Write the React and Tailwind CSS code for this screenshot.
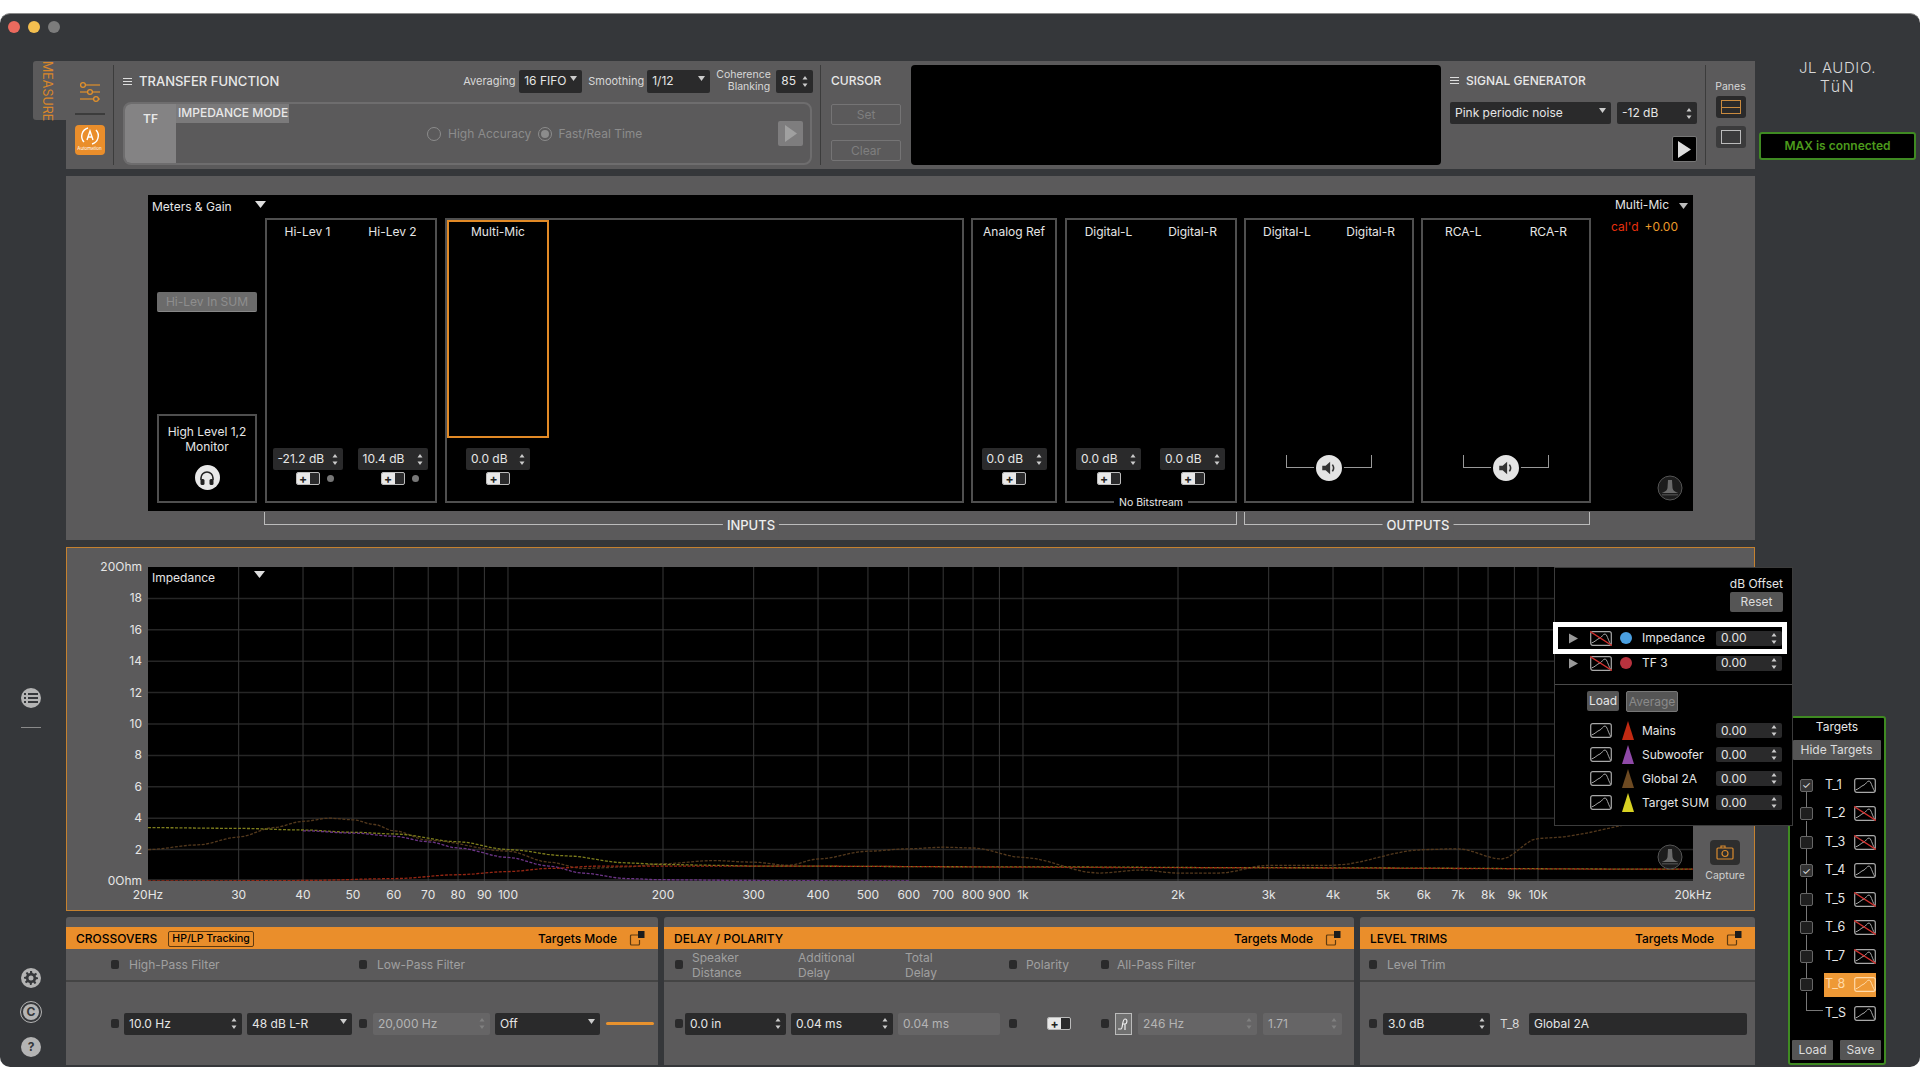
const FONT = 'font-["Inter","Liberation_Sans",sans-serif]'

// freq / ohm to plot pixels (plot is 1545 x 314)
const fx = f => (1545 * Math.log10(f / 20)) / 3
const oy = o => 314 - o * 15.7

const GRID_F = [30, 40, 50, 60, 70, 80, 90, 100, 200, 300, 400, 500, 600, 700, 800, 900, 1000, 2000, 3000, 4000, 5000, 6000, 7000, 8000, 9000, 10000]
const F_LABELS = [[20, '20Hz'], [30, '30'], [40, '40'], [50, '50'], [60, '60'], [70, '70'], [80, '80'], [90, '90'], [100, '100'], [200, '200'], [300, '300'], [400, '400'], [500, '500'], [600, '600'], [700, '700'], [800, '800'], [900, '900'], [1000, '1k'], [2000, '2k'], [3000, '3k'], [4000, '4k'], [5000, '5k'], [6000, '6k'], [7000, '7k'], [8000, '8k'], [9000, '9k'], [10000, '10k'], [20000, '20kHz']]
const O_LABELS = [[20, '20Ohm'], [18, '18'], [16, '16'], [14, '14'], [12, '12'], [10, '10'], [8, '8'], [6, '6'], [4, '4'], [2, '2'], [0, '0Ohm']]

const TRACES = [
  { color: '#54391d', pts: [[20, 2], [25, 2.3], [30, 2.8], [35, 3.4], [40, 3.8], [45, 4], [50, 3.9], [55, 3.6], [60, 3.2], [70, 2.6], [100, 1.9], [120, 1.2], [140, 0.8], [170, 0.9], [200, 1.1], [250, 1.3], [300, 1.2], [350, 1], [400, 1.4], [500, 1.9], [600, 2.05], [700, 2.15], [800, 2.1], [1000, 1.5], [1400, 0.5], [1700, 0.7], [2000, 0.5], [2400, 0.5], [3000, 1], [4000, 1], [6000, 2], [7000, 2.05], [8500, 1.4], [10000, 2.7], [20000, 4.2]] },
  { color: '#7d7d1c', pts: [[20, 3.4], [30, 3.35], [40, 3.25], [50, 3.1], [60, 3], [80, 2.5], [100, 2], [130, 1.6], [170, 1.15], [200, 1.05], [250, 1], [300, 0.95], [1000, 0.9], [3000, 0.85], [20000, 0.75]] },
  { color: '#6d3588', pts: [[40, 3.2], [50, 3.05], [60, 2.85], [70, 2.5], [80, 2.1], [100, 1.5], [120, 0.95], [140, 0.5], [170, 0.15], [200, 0.08], [300, 0.03], [600, 0]] },
  { color: '#962613', pts: [[20, 0], [40, 0.03], [60, 0.15], [80, 0.4], [100, 0.6], [120, 0.8], [150, 0.95], [300, 0.95], [2000, 0.85], [20000, 0.75]] },
]

// smooth enough for a log plot: many short segments interpolated between points
const tracePath = pts => {
  const out = []
  for (let i = 0; i < pts.length - 1; i++) {
    const [f0, o0] = pts[i]
    const [f1, o1] = pts[i + 1]
    for (let s = 0; s < 6; s++) {
      const t = s / 6
      const e = t * t * (3 - 2 * t)
      const f = f0 * Math.pow(f1 / f0, t)
      out.push(`${fx(f).toFixed(1)},${oy(o0 + (o1 - o0) * e).toFixed(1)}`)
    }
  }
  const last = pts[pts.length - 1]
  out.push(`${fx(last[0]).toFixed(1)},${oy(last[1]).toFixed(1)}`)
  return out.join(' ')
}

function Hamburger() {
  return (
    <div className="flex flex-col gap-[2px] w-[9px] mr-[7px] shrink-0">
      <div className="h-px bg-[#ddd]" />
      <div className="h-px bg-[#ddd]" />
      <div className="h-px bg-[#ddd]" />
    </div>
  )
}

function Arrows({ dim }) {
  const c = dim ? '#808080' : '#ccc'
  return (
    <svg width="6" height="13" viewBox="0 0 6 13" className="shrink-0">
      <path d="M3 1 L5.5 4.5 H0.5 Z" fill={c} />
      <path d="M3 12 L5.5 8.5 H0.5 Z" fill={c} />
    </svg>
  )
}

function Field({ w, children, dim, h = 'h-[22px]', arrows = true }) {
  return (
    <div
      style={{ width: w }}
      className={`${h} shrink-0 rounded-[2px] flex items-center justify-between pl-[5px] pr-[5px] text-[12px] ${dim ? 'bg-[#666566] text-[#b4b4b4]' : 'bg-[#2a2a2b] text-[#e6e6e6]'}`}
    >
      <span className="whitespace-nowrap">{children}</span>
      {arrows && <Arrows dim={dim} />}
    </div>
  )
}

function Select({ w, children, h = 'h-[22px]' }) {
  return (
    <div style={{ width: w }} className={`${h} shrink-0 rounded-[2px] bg-[#2a2a2b] flex justify-between pl-[5px] pr-[5px] text-[12px] text-[#e6e6e6]`}>
      <span className="self-center whitespace-nowrap">{children}</span>
      <svg width="7" height="5" viewBox="0 0 7 5" className="mt-[6px]"><path d="M0 0 H7 L3.5 5 Z" fill="#ccc" /></svg>
    </div>
  )
}

function Led({ className = '' }) {
  return <div className={`w-[8px] h-[9px] rounded-[2px] bg-[#2a2a2b] shrink-0 ${className}`} />
}

function Toggle() {
  return (
    <div className="w-[24px] h-[13px] rounded-[2px] bg-[#2a2a2b] border border-[#bbb] flex overflow-hidden">
      <div className="w-[13px] bg-[#e8e8e8] flex items-center justify-center text-[#222] text-[12px] font-bold leading-none">+</div>
    </div>
  )
}

function CurveIcon({ off, light }) {
  const c = light ? '#ffd9a8' : '#a8a8a8'
  return (
    <svg width="22" height="15" viewBox="0 0 22 15" className="shrink-0">
      <rect x="0.7" y="0.7" width="20.6" height="13.6" rx="2" fill="none" stroke={c} strokeWidth="1.2" />
      <path d="M1.5 12 C5 11 7 8 10 7 C12 6 13 3 15 3 C17 3 18 9 20.5 13" fill="none" stroke={c} strokeWidth="1" />
      {off && <path d="M0 0.5 L22 14.5" stroke="#d3312e" strokeWidth="1.4" />}
    </svg>
  )
}

function JLBadge({ className = '' }) {
  return (
    <svg width="26" height="26" viewBox="0 0 26 26" className={className}>
      <circle cx="13" cy="13" r="12" fill="#1c1c1c" stroke="#555" strokeWidth="1" />
      <path d="M11 5 H15 L15.5 13 C16 16 19 17 21 18 H5 C7 17 10 16 10.5 13 Z" fill="#6a6a6a" />
      <rect x="5" y="19" width="16" height="1.5" fill="#444" />
    </svg>
  )
}

function Strip({ label, children, className = '' }) {
  return (
    <div className={`flex flex-col items-center ${className}`}>
      <div className="mt-[4px] text-[12px] text-[#e6e6e6] whitespace-nowrap leading-[16px]">{label}</div>
      <div className="flex-1" />
      {children}
    </div>
  )
}

function Gain({ value, w, dot }) {
  return (
    <div className="flex flex-col items-center mb-[16px]">
      <Field w={w}>{value}</Field>
      <div className="relative mt-[2px]">
        <Toggle />
        {dot && <div className="absolute top-[3px] left-[31px] w-[7px] h-[7px] rounded-full bg-[#777]" />}
      </div>
    </div>
  )
}

function Speaker({ w }) {
  return (
    <div className="flex justify-center mb-[14px]">
      <div className="relative h-[32px]" style={{ width: w }}>
        <div className="absolute left-0 right-0 top-0 h-[13px] border-l border-r border-b border-[#999]" />
        <div className="absolute left-1/2 top-[-2px] -translate-x-1/2 w-[26px] h-[26px] rounded-full bg-[#e4e4e4] flex items-center justify-center border-2 border-black box-content">
          <svg width="18" height="18" viewBox="0 0 16 16">
            <path d="M2 6 H5 L9 2.5 V13.5 L5 10 H2 Z" fill="#333" />
            <path d="M11 5 C12.5 7 12.5 9 11 11" fill="none" stroke="#333" strokeWidth="1.4" />
          </svg>
        </div>
      </div>
    </div>
  )
}

function BoxRow({ className = '', children }) {
  return <div className={`border-2 border-[#4f4f4f] flex h-[285px] shrink-0 ${className}`}>{children}</div>
}

function MetersPanel() {
  return (
    <div className="ml-[82px] mr-[62px] h-[316px] bg-black flex relative text-[12px]">
      <div className="w-[117px] pl-[9px] pr-[8px] flex flex-col shrink-0">
        <div className="h-[23px] flex items-center justify-between text-[#e6e6e6]">
          <span className="-ml-[5px]">Meters &amp; Gain</span>
          <svg width="11" height="7" viewBox="0 0 11 7" className="mr-[-9px] mb-[4px]"><path d="M0 0 H11 L5.5 7 Z" fill="#ddd" /></svg>
        </div>
        <div className="mt-[74px] h-[20px] rounded-[2px] bg-[#6b6b6b] border-b border-[#888] flex items-center justify-center text-[#8e8e8e] whitespace-nowrap text-[12px]">Hi-Lev In SUM</div>
        <div className="mt-[102px] h-[89px] border-2 border-[#4f4f4f] flex flex-col items-center text-center text-[#e6e6e6] leading-[15px]">
          <div className="mt-[8px]">High Level 1,2<br />Monitor</div>
          <div className="mt-[11px] w-[25px] h-[25px] rounded-full bg-[#e8e8e8] flex items-center justify-center">
            <svg width="18" height="18" viewBox="0 0 18 18">
              <path d="M3 11 V9 a6 6 0 0 1 12 0 V11" fill="none" stroke="#222" strokeWidth="1.6" />
              <rect x="2.5" y="10" width="4" height="6" rx="1.5" fill="#222" />
              <rect x="11.5" y="10" width="4" height="6" rx="1.5" fill="#222" />
            </svg>
          </div>
        </div>
      </div>

      <div className="mt-[23px] flex shrink-0">
        <BoxRow className="w-[172px]">
          <Strip label="Hi-Lev 1" className="w-[84px] pr-[3px]"><Gain value="-21.2 dB" w="70px" dot /></Strip>
          <Strip label="Hi-Lev 2" className="w-[84px] pr-[1px]"><Gain value="10.4 dB" w="70px" dot /></Strip>
        </BoxRow>
        <BoxRow className="w-[519px] ml-[8px] relative">
          <Strip label="Multi-Mic" className="w-[102px]"><Gain value="0.0 dB" w="64px" /></Strip>
          <div className="absolute left-[0px] top-[0px] w-[102px] h-[218px] border-2 border-[#e28a26]" />
        </BoxRow>
        <BoxRow className="w-[86px] ml-[7px]">
          <Strip label="Analog Ref" className="w-full"><Gain value="0.0 dB" w="65px" /></Strip>
        </BoxRow>
        <BoxRow className="w-[172px] ml-[8px] relative">
          <Strip label="Digital-L" className="w-[84px]"><Gain value="0.0 dB" w="65px" /></Strip>
          <Strip label="Digital-R" className="w-[86px]"><Gain value="0.0 dB" w="65px" /></Strip>
          <div className="absolute left-1/2 -translate-x-1/2 bottom-[-9px] bg-black px-[5px] text-[#e6e6e6] text-[10.5px] whitespace-nowrap leading-[14px]">No Bitstream</div>
        </BoxRow>
        <BoxRow className="w-[170px] ml-[7px]">
          <div className="w-full flex flex-col">
            <div className="flex justify-between px-[17px] mt-[4px] text-[12px] text-[#e6e6e6] leading-[16px]"><span>Digital-L</span><span>Digital-R</span></div>
            <div className="flex-1" />
            <Speaker w="86px" />
          </div>
        </BoxRow>
        <BoxRow className="w-[170px] ml-[7px]">
          <div className="w-full flex flex-col">
            <div className="flex justify-between px-[22px] mt-[4px] text-[12px] text-[#e6e6e6] leading-[16px]"><span>RCA-L</span><span>RCA-R</span></div>
            <div className="flex-1" />
            <Speaker w="86px" />
          </div>
        </BoxRow>
      </div>

      <div className="flex-1 flex flex-col items-end pr-[5px] text-[12px]">
        <div className="h-[20px] flex items-center gap-[10px] text-[#e6e6e6]">
          <span>Multi-Mic</span>
          <svg width="9" height="6" viewBox="0 0 9 6" className="mt-[2px]"><path d="M0 0 H9 L4.5 6 Z" fill="#bbb" /></svg>
        </div>
        <div className="mt-[3px] mr-[10px] flex gap-[6px]">
          <span className="text-[#e8300e]">cal'd</span>
          <span className="text-[#ea9a2a]">+0.00</span>
        </div>
        <div className="flex-1" />
        <JLBadge className="mb-[10px] mr-[5px]" />
      </div>
    </div>
  )
}

function Bracket({ w, ml, label, center }) {
  return (
    <div style={{ width: w, marginLeft: ml }} className="relative h-[13px] border-l border-r border-b border-[#bbb] shrink-0">
      <span style={{ left: center }} className="absolute top-[5px] -translate-x-1/2 bg-[#5b5a5b] px-[4px] text-[13px] leading-[16px] font-medium text-[#eee]">{label}</span>
    </div>
  )
}

function Plot() {
  return (
    <div className="relative w-[1545px] h-[314px] bg-black ml-[81px] mt-[19px]">
      <svg width="1545" height="314" className="absolute left-0 top-0">
        {O_LABELS.slice(1, -1).map(([o]) => (
          <line key={o} x1="0" x2="1545" y1={oy(o)} y2={oy(o)} stroke="#262626" strokeWidth="1.5" />
        ))}
        {GRID_F.map(f => (
          <line key={f} x1={fx(f)} x2={fx(f)} y1="0" y2="314" stroke="#383838" strokeWidth="1" />
        ))}
        <line x1="0" x2="1545" y1="313" y2="313" stroke="#444" />
        {TRACES.map(t => (
          <polyline key={t.color} points={tracePath(t.pts)} fill="none" stroke={t.color} strokeWidth="1.3" strokeDasharray="3 1.5" />
        ))}
      </svg>
      <div className="absolute left-[4px] top-[2px] w-[113px] flex justify-between text-[12px] text-[#e6e6e6] leading-[18px]">
        <span>Impedance</span>
        <svg width="11" height="7" viewBox="0 0 11 7" className="mt-[2px]"><path d="M0 0 H11 L5.5 7 Z" fill="#ddd" /></svg>
      </div>
      <JLBadge className="absolute left-[1509px] top-[277px]" />
      {O_LABELS.map(([o, label]) => (
        <span key={o} style={{ top: oy(o) - 8 }} className="absolute right-[1551px] text-[12px] leading-[16px] text-[#e6e6e6] whitespace-nowrap">{label}</span>
      ))}
      {F_LABELS.map(([f, label]) => (
        <span key={f} style={{ left: fx(f) }} className="absolute top-[320px] -translate-x-1/2 text-[12px] leading-[16px] text-[#e6e6e6] whitespace-nowrap">{label}</span>
      ))}
    </div>
  )
}

const TRACE_ROWS = [
  { name: 'Mains', color: '#c22a12' },
  { name: 'Subwoofer', color: '#8f49a8' },
  { name: 'Global 2A', color: '#6d4a22' },
  { name: 'Target SUM', color: '#d8d222' },
]

function Triangle({ color }) {
  return (
    <svg width="12" height="19" viewBox="0 0 12 19" className="shrink-0">
      <path d="M6 0 L12 19 H0 Z" fill={color} />
    </svg>
  )
}

function OffsetField() {
  return <Field w="66px" h="h-[15px]">0.00</Field>
}

function LegendPopover() {
  return (
    <div className="absolute left-[1487px] top-[19px] w-[239px] h-[259px] bg-black border border-[#3c3c3c] text-[12px] text-[#e6e6e6]">
      <div className="text-right pr-[9px] mt-[9px] leading-[14px]">dB Offset</div>
      <div className="ml-auto mr-[9px] mt-[1px] w-[53px] h-[20px] rounded-[2px] bg-[#555] flex items-center justify-center text-[#ddd]">Reset</div>

      <div className="-ml-[2px] mt-[10px] w-[234px] h-[32px] border-[5px] border-white flex items-center">
        <svg width="14" height="11" viewBox="0 0 14 11" className="ml-[10px] shrink-0"><path d="M1 0.5 L10 5.5 L1 10.5 Z" fill="#999" /></svg>
        <div className="ml-[8px]"><CurveIcon off /></div>
        <div className="ml-[8px] w-[12px] h-[12px] rounded-full bg-[#4a9fe0] shrink-0" />
        <span className="ml-[10px] w-[74px]">Impedance</span>
        <OffsetField />
      </div>
      <div className="h-[18px] flex items-center">
        <svg width="14" height="11" viewBox="0 0 14 11" className="ml-[13px] shrink-0"><path d="M1 0.5 L10 5.5 L1 10.5 Z" fill="#999" /></svg>
        <div className="ml-[8px]"><CurveIcon off /></div>
        <div className="ml-[8px] w-[12px] h-[12px] rounded-full bg-[#b8323e] shrink-0" />
        <span className="ml-[10px] w-[74px]">TF 3</span>
        <OffsetField />
      </div>
      <div className="mt-[12px] border-t border-[#4a4a4a] pt-[6px] pl-[32px] flex gap-[7px]">
        <div className="w-[32px] h-[20px] rounded-[2px] bg-[#555] flex items-center justify-center">Load</div>
        <div className="w-[52px] h-[21px] rounded-[2px] bg-[#555] border border-[#777] flex items-center justify-center text-[#8a8a8a]">Average</div>
      </div>
      <div className="mt-[9px] flex flex-col gap-[5px]">
        {TRACE_ROWS.map(r => (
          <div key={r.name} className="h-[19px] flex items-center">
            <div className="ml-[35px]"><CurveIcon /></div>
            <div className="ml-[10px]"><Triangle color={r.color} /></div>
            <span className="ml-[8px] w-[74px] whitespace-nowrap">{r.name}</span>
            <OffsetField />
          </div>
        ))}
      </div>
    </div>
  )
}

function TopBar() {
  return (
    <div className="h-[108px] bg-[#5b5a5b] flex py-[4px] text-[#e8e8e8]">
      {/* sliders + automation */}
      <div className="w-[48px] border-r border-[#3c3c3c] flex flex-col items-center shrink-0">
        <svg width="24" height="24" viewBox="0 0 24 24" className="mt-[15px]" fill="none" stroke="#e0902c" strokeWidth="1.3">
          <path d="M2 5 H22 M2 12 H22 M2 19 H22" opacity="0.8" />
          <circle cx="5" cy="5" r="2.4" fill="#5b5a5b" />
          <circle cx="12" cy="12" r="2.4" fill="#5b5a5b" />
          <circle cx="18" cy="19" r="2.4" fill="#5b5a5b" />
        </svg>
        <div className="mt-[9px] w-[30px] h-[2px] bg-[#3c3c3c]" />
        <div className="mt-[10px] w-[30px] h-[30px] rounded-[4px] bg-[#ea8e2b] flex flex-col items-center">
          <svg width="22" height="22" viewBox="0 0 22 22" fill="none" stroke="#fff" strokeWidth="1.4">
            <path d="M5 17 A8.5 8.5 0 0 1 9 3" />
            <path d="M17 5 A8.5 8.5 0 0 1 13 19" />
            <path d="M8 15 L11 6 L14 15 M9 12 H13" />
          </svg>
          <span className="text-[4.5px] leading-none text-white">Automation</span>
        </div>
      </div>

      {/* transfer function */}
      <div className="w-[707px] shrink-0 border-r border-[#3c3c3c] px-[9px] flex flex-col">
        <div className="h-[33px] flex items-center text-[11px]">
          <Hamburger />
          <span className="text-[13px] font-medium whitespace-nowrap">TRANSFER FUNCTION</span>
          <span className="ml-[184px] w-[50px] text-[#d8d8d8] whitespace-nowrap">Averaging</span>
          <div className="ml-[6px]"><Select w="63px" h="h-[23px]"><span className="text-[12px]">16 FIFO</span></Select></div>
          <span className="ml-[6px] w-[53px] text-[#d8d8d8]">Smoothing</span>
          <div className="ml-[6px]"><Select w="63px" h="h-[23px]">1/12</Select></div>
          <span className="ml-[6px] w-[54px] text-right leading-[12px] text-[10.5px] text-[#d8d8d8]">Coherence Blanking</span>
          <div className="ml-[6px]"><Field w="37px" h="h-[23px]">85</Field></div>
        </div>
        <div className="mt-[4px] h-[64px] w-[689px] rounded-[8px] border-2 border-[#6e6d6e] flex overflow-hidden">
          <div className="w-[51px] bg-[#848384] flex justify-center pt-[6px] text-[12px] font-semibold shrink-0">TF</div>
          <div className="flex-1 flex flex-col relative">
            <div className="w-[113px] h-[19px] bg-[#7b7a7b] text-[12px] font-medium flex items-center pl-[2px] whitespace-nowrap">IMPEDANCE MODE</div>
            <div className="absolute left-[251px] top-[22px] h-[16px] flex items-center text-[12px] text-[#8c8c8c]">
              <div className="w-[14px] h-[14px] rounded-full border border-[#8c8c8c]" />
              <span className="ml-[7px] whitespace-nowrap">High Accuracy</span>
              <div className="ml-[7px] w-[14px] h-[14px] rounded-full border border-[#8c8c8c] flex items-center justify-center"><div className="w-[8px] h-[8px] rounded-full bg-[#8c8c8c]" /></div>
              <span className="ml-[6px] whitespace-nowrap">Fast/Real Time</span>
            </div>
            <div className="absolute left-[602px] top-[17px] w-[25px] h-[25px] rounded-[2px] bg-[#7e7d7e] flex items-center justify-center">
              <svg width="13" height="17" viewBox="0 0 13 17"><path d="M1 0 L13 8.5 L1 17 Z" fill="#a0a0a0" /></svg>
            </div>
          </div>
        </div>
      </div>

      {/* cursor */}
      <div className="w-[90px] shrink-0 pl-[10px] flex flex-col">
        <div className="h-[31px] flex items-center text-[12px] font-medium">CURSOR</div>
        <div className="mt-[8px] w-[70px] h-[21px] border border-[#757475] rounded-[2px] flex items-center justify-center text-[12px] text-[#7f7f7f]">Set</div>
        <div className="mt-[15px] w-[70px] h-[21px] border border-[#757475] rounded-[2px] flex items-center justify-center text-[12px] text-[#7f7f7f]">Clear</div>
      </div>

      {/* readout */}
      <div className="w-[530px] shrink-0 bg-black rounded-[4px]" />

      {/* signal generator */}
      <div className="w-[265px] shrink-0 border-r border-[#3c3c3c] pl-[9px] flex flex-col">
        <div className="h-[31px] flex items-center">
          <Hamburger />
          <span className="text-[12px] font-medium whitespace-nowrap">SIGNAL GENERATOR</span>
        </div>
        <div className="mt-[6px] flex gap-[6px]">
          <Select w="161px">Pink periodic noise</Select>
          <Field w="80px">-12 dB</Field>
        </div>
        <div className="mt-[12px] ml-[222px] w-[25px] h-[26px] bg-black border border-[#777] rounded-[2px] flex items-center justify-center">
          <svg width="13" height="17" viewBox="0 0 13 17"><path d="M0 0 L13 8.5 L0 17 Z" fill="#ddd" /></svg>
        </div>
      </div>

      {/* panes */}
      <div className="flex-1 flex flex-col items-center text-[10.5px] text-[#d8d8d8]">
        <div className="mt-[15px] leading-[13px]">Panes</div>
        <div className="mt-[3px] w-[30px] h-[22px] rounded-[3px] bg-[#2a2a2b] flex items-center justify-center">
          <div className="w-[20px] h-[14px] border border-[#c98a3e] flex items-center"><div className="w-full h-px bg-[#c98a3e]" /></div>
        </div>
        <div className="mt-[8px] w-[30px] h-[22px] rounded-[3px] bg-[#3b3b3c] flex items-center justify-center">
          <div className="w-[20px] h-[14px] border border-[#bbb]" />
        </div>
      </div>
    </div>
  )
}

function MetersSection() {
  return (
    <div className="h-[364px] bg-[#5b5a5b] pt-[19px]">
      <MetersPanel />
      <div className="flex mt-[1px]">
        <Bracket w="973px" ml="198px" label="INPUTS" center="486px" />
        <Bracket w="346px" ml="7px" label="OUTPUTS" center="173px" />
      </div>
    </div>
  )
}

function GraphSection() {
  return (
    <div className="relative z-10 h-[364px] bg-[#5b5a5b] border border-[#c5812f] box-border">
      <Plot />
      <div className="absolute left-[1631px] top-[292px] w-[54px] flex flex-col items-center">
        <div className="w-[30px] h-[25px] rounded-[4px] bg-[#2e2e2e] flex items-center justify-center">
          <svg width="18" height="15" viewBox="0 0 18 15" fill="none" stroke="#d98a2e" strokeWidth="1.2">
            <rect x="1" y="3" width="16" height="11" rx="1" />
            <circle cx="9" cy="8.5" r="3" />
            <path d="M5 3 V1 H9 V3" />
          </svg>
        </div>
        <span className="mt-[5px] text-[10.5px] text-[#cfcfcf] leading-[12px]">Capture</span>
      </div>
      <LegendPopover />
    </div>
  )
}

function TargetsModeBtn() {
  return (
    <div className="flex items-center ml-auto">
      <span className="text-[12px] font-medium text-black whitespace-nowrap">Targets Mode</span>
      <svg width="16" height="16" viewBox="0 0 16 16" fill="none" className="ml-[12px]">
        <path d="M10 4 H2.5 a1 1 0 0 0 -1 1 V13 a1 1 0 0 0 1 1 H9.5 a1 1 0 0 0 1 -1 V9" stroke="#5e3a10" strokeWidth="1.2" />
        <rect x="9" y="0" width="6.5" height="7" fill="#1c1c1c" />
      </svg>
    </div>
  )
}

function Bottom({ w, title, extra, subRow, ctrlRow }) {
  return (
    <div style={{ width: w }} className="h-[148px] rounded-t-[3px] bg-[#5b5a5b] flex flex-col shrink-0">
      <div className="mt-[10px] h-[22px] bg-[#ea8e2b] flex items-center pl-[10px] pr-[13px] pt-[2px] text-black">
        <span className="text-[12px] font-medium whitespace-nowrap">{title}</span>
        {extra}
        <TargetsModeBtn />
      </div>
      <div className="h-[33px] flex items-center text-[12px] text-[#a0a0a0] leading-[15px] border-b-2 border-[#444]">{subRow}</div>
      <div className="flex-1 flex items-center">{ctrlRow}</div>
    </div>
  )
}

function CrossoversSub() {
  return (
    <>
      <Led className="ml-[45px]" />
      <span className="ml-[10px] w-[230px]">High-Pass Filter</span>
      <Led />
      <span className="ml-[10px]">Low-Pass Filter</span>
    </>
  )
}

function CrossoversCtrl() {
  return (
    <>
      <Led className="ml-[45px]" />
      <div className="ml-[5px]"><Field w="118px">10.0 Hz</Field></div>
      <div className="ml-[5px]"><Select w="105px">48 dB L-R</Select></div>
      <Led className="ml-[7px]" />
      <div className="ml-[6px]"><Field w="117px" dim>20,000 Hz</Field></div>
      <div className="ml-[5px]"><Select w="105px">Off</Select></div>
      <div className="ml-[6px] w-[48px] h-[3px] bg-[#e8922e] rounded-full" />
    </>
  )
}

function DelaySub() {
  return (
    <>
      <Led className="ml-[11px]" />
      <span className="ml-[9px] w-[106px]">Speaker<br />Distance</span>
      <span className="w-[107px]">Additional<br />Delay</span>
      <span className="w-[104px]">Total<br />Delay</span>
      <Led />
      <span className="ml-[9px] w-[75px]">Polarity</span>
      <Led />
      <span className="ml-[8px]">All-Pass Filter</span>
    </>
  )
}

function DelayCtrl() {
  return (
    <>
      <Led className="ml-[11px]" />
      <div className="ml-[2px]"><Field w="101px">0.0 in</Field></div>
      <div className="ml-[5px]"><Field w="102px">0.04 ms</Field></div>
      <div className="ml-[5px]"><Field w="102px" dim arrows={false}>0.04 ms</Field></div>
      <Led className="ml-[9px]" />
      <div className="ml-[30px]"><Toggle /></div>
      <Led className="ml-[30px]" />
      <div className="ml-[6px] w-[17px] h-[22px] bg-[#707070] border border-[#bbb] flex items-center justify-center">
        <svg width="13" height="16" viewBox="0 0 13 16" fill="none" stroke="#eee" strokeWidth="1.2"><path d="M1 13 H4 C6 13 5 3 8 3 C11 3 10 8 8 8 H5 M8 8 V14" /></svg>
      </div>
      <div className="ml-[6px]"><Field w="119px" dim>246 Hz</Field></div>
      <div className="ml-[6px]"><Field w="79px" dim>1.71</Field></div>
    </>
  )
}

function LevelSub() {
  return (
    <>
      <Led className="ml-[9px]" />
      <span className="ml-[10px]">Level Trim</span>
    </>
  )
}

function LevelCtrl() {
  return (
    <>
      <Led className="ml-[9px]" />
      <div className="ml-[6px]"><Field w="107px">3.0 dB</Field></div>
      <span className="ml-[10px] w-[29px] text-[12px] text-[#d8d8d8]">T_8</span>
      <Field w="218px" arrows={false}>Global 2A</Field>
    </>
  )
}

const TARGETS = [
  { name: 'T_1', checked: true },
  { name: 'T_2', off: true },
  { name: 'T_3', off: true },
  { name: 'T_4', checked: true },
  { name: 'T_5', off: true },
  { name: 'T_6', off: true },
  { name: 'T_7', off: true },
  { name: 'T_8', active: true },
]

function TargetsPanel() {
  return (
    <div className="w-[98px] h-[349px] rounded-[3px] bg-black border-2 border-[#3f8a22] flex flex-col items-center text-[12.5px] text-[#e6e6e6]">
      <div className="mt-[1px] leading-[16px] text-[12px]">Targets</div>
      <div className="mt-[5px] -ml-[1px] w-[88px] h-[20px] bg-[#555] rounded-[1px] flex items-center justify-center text-[#ddd] text-[12px]">Hide Targets</div>
      <div className="mt-[11px] w-full flex flex-col">
        {TARGETS.map(t => (
          <div key={t.name} className="h-[28.5px] flex items-center pl-[10px] relative">
            <div className={`w-[13px] h-[13px] rounded-[2px] border border-[#666] flex items-center justify-center text-[10px] leading-none shrink-0 ${t.checked ? 'bg-[#333]' : 'bg-[#1f1f1f]'}`}>{t.checked ? '✓' : ''}</div>
            <div className="absolute left-[16px] top-[21px] w-px h-[15px] bg-[#777]" />
            <div className={`ml-[11px] h-[24px] flex items-center pl-[1px] pr-0 w-[52px] justify-between ${t.active ? 'bg-[#ee9936] text-[#ffd9a8]' : ''}`}>
              <span>{t.name}</span>
              <CurveIcon off={t.off} light={t.active} />
            </div>
          </div>
        ))}
        <div className="h-[28px] flex items-center pl-[10px] relative">
          <div className="absolute left-[16px] top-[-2px] w-[17px] h-[14px] border-l border-b border-[#777]" />
          <div className="ml-[24px] h-[24px] flex items-center pl-[1px] pr-0 w-[52px] justify-between">
            <span>T_S</span>
            <CurveIcon />
          </div>
        </div>
      </div>
      <div className="mt-auto mb-[3px] flex gap-[7px] -ml-[1px] text-[12px]">
        <div className="w-[41px] h-[20px] bg-[#555] rounded-[1px] flex items-center justify-center text-[#ddd]">Load</div>
        <div className="w-[41px] h-[20px] bg-[#555] rounded-[1px] flex items-center justify-center text-[#ddd]">Save</div>
      </div>
    </div>
  )
}

function RoundIcon({ children, className = '' }) {
  return <div className={`w-[20px] h-[20px] rounded-full bg-[#b4b4b4] flex items-center justify-center text-[#35373a] ${className}`}>{children}</div>
}

function LeftRail() {
  return (
    <div className="w-[66px] shrink-0 flex flex-col">
      <div className="ml-[33px] w-[33px] h-[59px] bg-[#5b5a5b] rounded-l-[3px] pl-[7px]">
        <span className="block [writing-mode:vertical-rl] text-[12.5px] leading-[14px] text-[#d8862a] whitespace-nowrap">MEASURE</span>
      </div>
      <div className="ml-[21px] mt-[568px] flex flex-col items-start">
        <RoundIcon>
          <svg width="14" height="12" viewBox="0 0 14 12" fill="none" stroke="#35373a" strokeWidth="2"><path d="M0 2 H2 M4 2 H14 M0 6 H2 M4 6 H14 M0 10 H2 M4 10 H14" /></svg>
        </RoundIcon>
        <div className="mt-[19px] w-[20px] h-px bg-[#8a8a8a]" />
        <RoundIcon className="mt-[240px]">
          <svg width="14" height="14" viewBox="0 0 14 14" fill="#35373a"><path d="M6 0 H8 L8.4 2 L10.2 2.8 L12 1.7 L13 3.3 L11.6 4.7 L12 6 L14 6.5 V8 L12 8.4 L11.3 10.2 L12.3 12 L10.7 13 L9.3 11.6 L8 12 L7.5 14 H6 L5.6 12 L3.8 11.3 L2 12.3 L1 10.7 L2.4 9.3 L2 8 L0 7.5 V6 L2 5.6 L2.8 3.8 L1.7 2 L3.3 1 L4.7 2.4 L6 2 Z M7 4.5 A2.5 2.5 0 1 0 7 9.5 A2.5 2.5 0 1 0 7 4.5 Z" fillRule="evenodd" /></svg>
        </RoundIcon>
        <RoundIcon className="mt-[14px] border-2 border-[#35373a] outline outline-[#b4b4b4]">
          <span className="text-[12px] font-bold leading-none">C</span>
        </RoundIcon>
        <RoundIcon className="mt-[15px]">
          <span className="text-[12px] font-bold leading-none">?</span>
        </RoundIcon>
      </div>
    </div>
  )
}

function RightRail() {
  return (
    <div className="flex-1 flex flex-col relative">
      <div className="mt-[-2px] ml-[4px] w-[157px] flex flex-col items-center text-[#d8d8d8] font-light">
        <div className="text-[15px] leading-[18px] tracking-[0.6px] whitespace-nowrap">JL AUDIO.</div>
        <div className="text-[16px] leading-[18px] tracking-[1.5px]">TüN</div>
      </div>
      <div className="mt-[37px] ml-[4px] w-[157px] h-[28px] rounded-[3px] bg-black border-2 border-[#3f8a22] flex items-center justify-center text-[12px] font-semibold text-[#4c9a1c]">MAX is connected</div>
      <div className="ml-[33px] mt-[556px]"><TargetsPanel /></div>
    </div>
  )
}

export default function App() {
  return (
    <div className={`w-[1920px] h-[1080px] bg-white py-[13px] overflow-hidden ${FONT}`}>
      <div className="h-full bg-[#35373a] rounded-[10px] border-t border-[#8a8a8a] flex flex-col overflow-hidden">
        <div className="h-[47px] shrink-0 flex items-start pt-[7px] pl-[8px] gap-[8px]">
          <div className="w-[12px] h-[12px] rounded-full bg-[#ec6a5e]" />
          <div className="w-[12px] h-[12px] rounded-full bg-[#f4bf4f]" />
          <div className="w-[12px] h-[12px] rounded-full bg-[#7c7c7c]" />
        </div>
        <div className="flex-1 flex min-h-0">
          <LeftRail />
          <div className="w-[1689px] shrink-0 flex flex-col">
            <TopBar />
            <div className="mt-[7px]"><MetersSection /></div>
            <div className="mt-[7px]"><GraphSection /></div>
            <div className="mt-[6px] flex gap-[6px]">
              <Bottom
                w="592px"
                title="CROSSOVERS"
                extra={<div className="ml-[11px] h-[16px] px-[3px] border border-[#5e3a10] rounded-[2px] text-[10.5px] font-medium flex items-center whitespace-nowrap">HP/LP Tracking</div>}
                subRow={<CrossoversSub />}
                ctrlRow={<CrossoversCtrl />}
              />
              <Bottom w="690px" title="DELAY / POLARITY" subRow={<DelaySub />} ctrlRow={<DelayCtrl />} />
              <Bottom w="395px" title="LEVEL TRIMS" subRow={<LevelSub />} ctrlRow={<LevelCtrl />} />
            </div>
          </div>
          <RightRail />
        </div>
      </div>
    </div>
  )
}
